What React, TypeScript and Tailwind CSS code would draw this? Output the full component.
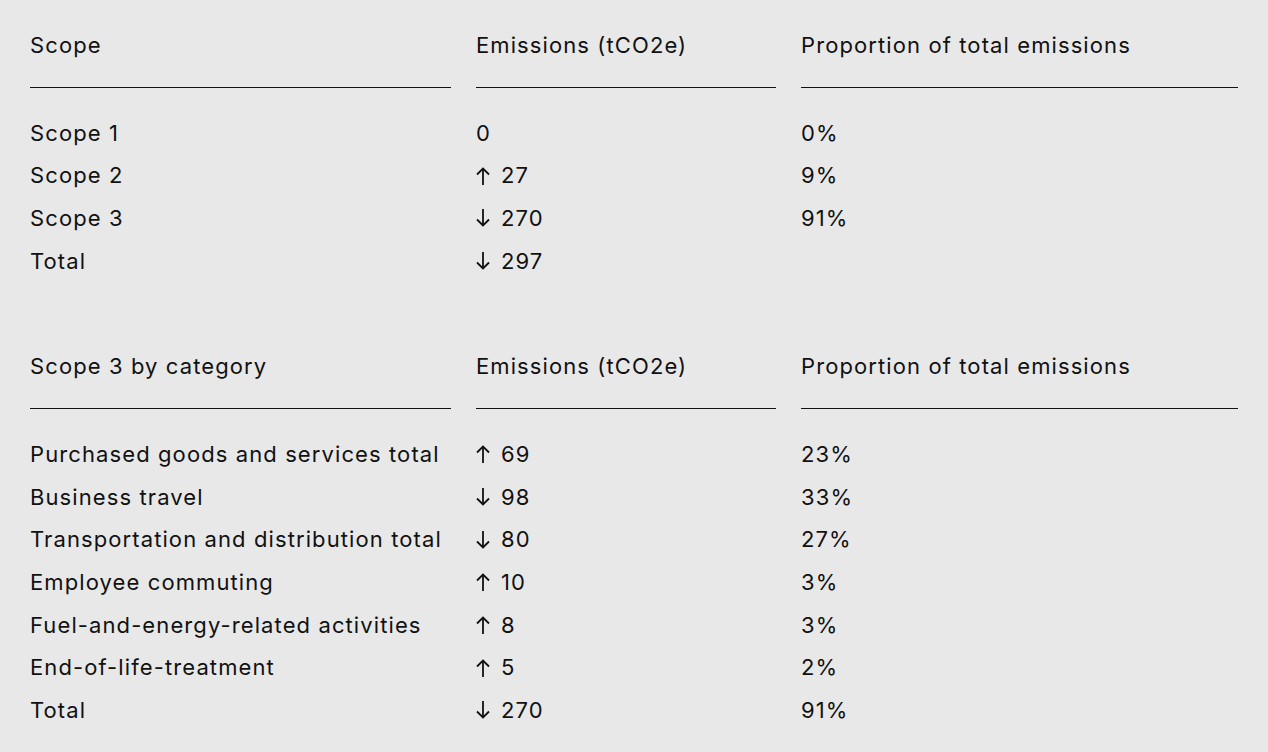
import React from "react";

type Dir = "up" | "down" | null;
type Row = { label: string; dir: Dir; value: string; pct: string };

const Arrow = ({ dir }: { dir: "up" | "down" }) => (
  <svg
    width="14"
    height="18"
    viewBox="0 0 14 18"
    fill="none"
    stroke="#111"
    strokeWidth="1.8"
    strokeLinecap="butt"
    strokeLinejoin="miter"
    className="mr-[11px] shrink-0"
  >
    {dir === "up" ? (
      <>
        <path d="M7 1.5V18" />
        <path d="M1 7.5L7 1.5L13 7.5" />
      </>
    ) : (
      <>
        <path d="M7 0V16.5" />
        <path d="M1 10.5L7 16.5L13 10.5" />
      </>
    )}
  </svg>
);

const Table = ({ headers, rows }: { headers: [string, string, string]; rows: Row[] }) => (
  <div className="grid grid-cols-[421px_300px_1fr] gap-x-[25px]">
    {headers.map((h) => (
      <div key={h} className="pb-[20px] border-b border-[#111] leading-[42.67px] whitespace-nowrap">
        {h}
      </div>
    ))}
    {rows.map((r, i) => (
      <React.Fragment key={r.label + i}>
        <div className={`leading-[42.67px] whitespace-nowrap ${i === 0 ? "mt-[24px]" : ""}`}>{r.label}</div>
        <div className={`leading-[42.67px] flex items-center ${i === 0 ? "mt-[24px]" : ""}`}>
          {r.dir && <Arrow dir={r.dir} />}
          <span>{r.value}</span>
        </div>
        <div className={`leading-[42.67px] ${i === 0 ? "mt-[24px]" : ""}`}>{r.pct}</div>
      </React.Fragment>
    ))}
  </div>
);

export default function App() {
  const t1: Row[] = [
    { label: "Scope 1", dir: null, value: "0", pct: "0%" },
    { label: "Scope 2", dir: "up", value: "27", pct: "9%" },
    { label: "Scope 3", dir: "down", value: "270", pct: "91%" },
    { label: "Total", dir: "down", value: "297", pct: "" },
  ];
  const t2: Row[] = [
    { label: "Purchased goods and services total", dir: "up", value: "69", pct: "23%" },
    { label: "Business travel", dir: "down", value: "98", pct: "33%" },
    { label: "Transportation and distribution total", dir: "down", value: "80", pct: "27%" },
    { label: "Employee commuting", dir: "up", value: "10", pct: "3%" },
    { label: "Fuel-and-energy-related activities", dir: "up", value: "8", pct: "3%" },
    { label: "End-of-life-treatment", dir: "up", value: "5", pct: "2%" },
    { label: "Total", dir: "down", value: "270", pct: "91%" },
  ];
  return (
    <div
      className="min-h-screen bg-[#e8e8e8] text-[#111] text-[22px] tracking-[1.1px] px-[30px] pt-[24px] pb-[21px]"
      style={{ fontFamily: "Inter, 'Noto Sans', sans-serif" }}
    >
      <Table headers={["Scope", "Emissions (tCO2e)", "Proportion of total emissions"]} rows={t1} />
      <div className="h-[63px]" />
      <Table headers={["Scope 3 by category", "Emissions (tCO2e)", "Proportion of total emissions"]} rows={t2} />
    </div>
  );
}
